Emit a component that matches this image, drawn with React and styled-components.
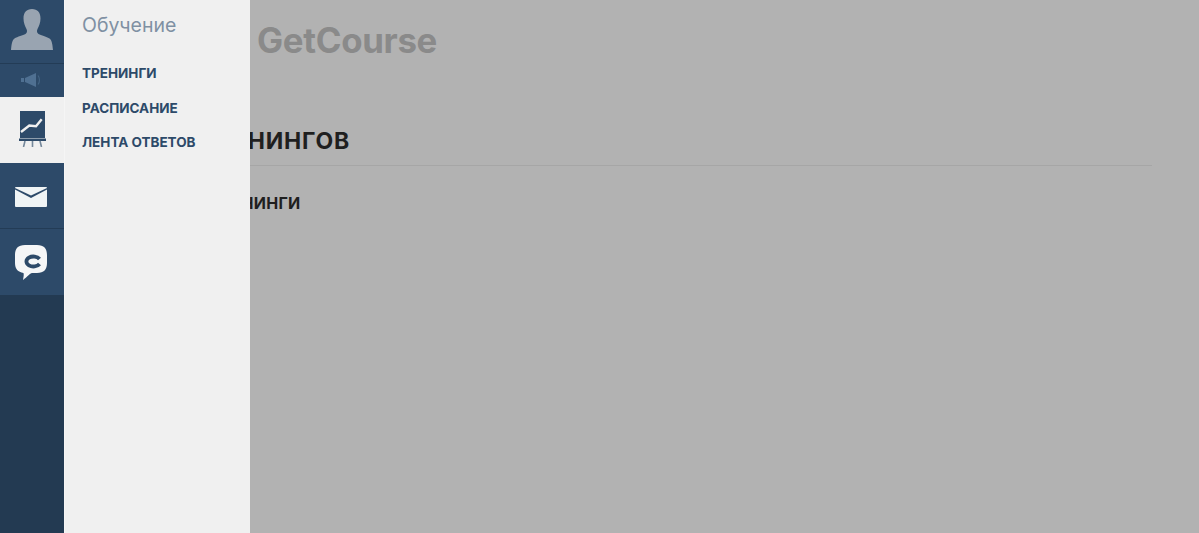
import styled, { createGlobalStyle } from "styled-components";

const GlobalStyle = createGlobalStyle`
  html, body {
    margin: 0;
    height: 100%;
    overflow: hidden;
    background: #b2b2b2;
    font-family: "Inter", "Liberation Sans", sans-serif;
  }
`;

const Page = styled.div`
  position: relative;
  height: 533px;
  overflow: hidden;
  background: #b2b2b2;
`;

const Main = styled.main`
  padding: 0 47px 0 87px;
`;

const Logo = styled.div`
  padding: 20px 0 0 170px;
  font-size: 34.8px;
  line-height: 40px;
  font-weight: 700;
  letter-spacing: -0.3px;
  color: #8a8a8a;
`;

const Title = styled.h1`
  margin: 67px 0 0;
  padding: 0 0 10px 0;
  border-bottom: 1px solid #a6a6a6;
  font-size: 23px;
  line-height: 28px;
  font-weight: 700;
  letter-spacing: 0.8px;
  text-transform: uppercase;
  color: #1f1f1f;
`;

const SubTitle = styled.h2`
  margin: 27px 0 0;
  padding-left: 23px;
  font-size: 16px;
  line-height: 20px;
  font-weight: 700;
  letter-spacing: 0.3px;
  text-transform: uppercase;
  color: #1f1f1f;
`;

const Menu = styled.aside`
  position: absolute;
  top: 0;
  left: 0;
  bottom: 0;
  display: flex;
  width: 250px;
`;

const Rail = styled.nav`
  width: 64px;
  background: #233a52;
`;

const RailItem = styled.div`
  display: flex;
  align-items: center;
  justify-content: center;
  height: ${(p) => p.$h}px;
  box-sizing: border-box;
  padding: ${(p) => p.$pt || 0}px ${(p) => p.$pr || 0}px ${(p) => p.$pb || 0}px 0;
  background: ${(p) => (p.$active ? "#f0f0f0" : "#2d4a69")};
  border-bottom: ${(p) => (p.$line ? "1px solid #233c56" : "none")};
`;

const SubMenu = styled.div`
  flex: 1;
  padding: 13px 0 0 17px;
  background: #f0f0f0;
  border-left: 1px solid #f5f5f5;
`;

const SubHeading = styled.div`
  margin-bottom: 26px;
  font-size: 19.5px;
  line-height: 24px;
  color: #7f90a3;
`;

const SubLink = styled.a`
  display: block;
  height: 34.5px;
  font-size: 13.5px;
  line-height: 20px;
  font-weight: 700;
  letter-spacing: 0;
  color: #2d4a69;
`;

const UserIcon = () => (
  <svg width="42" height="41" viewBox="0 0 42 41">
    <path
      fill="#99a4b1"
      d="M21 0c-5.500 0-8.500 3.500-8.500 9.500 0 4 1.500 8 3 10.500 1 2 .5 4-1 5-2.500 1.500-8 2.500-11 4.500C1 31 .5 36 0 41h42c-.5-5-1-10-3.500-11.500-3-2-8.500-3-11-4.500-1.500-1-2-3-1-5 1.500-2.500 3-6.500 3-10.500C29.500 3.500 26.500 0 21 0z"
    />
  </svg>
);

const SpeakerIcon = () => (
  <svg width="21" height="14" viewBox="0 0 21 14">
    <path fill="#4f7092" d="M0 5h3v4H0zM4 5l11-5v14L4 9z" />
    <path fill="none" stroke="#436484" strokeWidth="1.2" d="M17 2.500c2 2.500 2 6.500 0 9" />
  </svg>
);

const BoardIcon = () => (
  <svg width="27" height="36" viewBox="0 0 27 36">
    <path fill="#2d4a69" d="M1 0h25v27H1z" />
    <path fill="none" stroke="#f0f0f0" strokeWidth="2.400" d="M2 21l8.300-6.500 6.700.7 5.700-7" />
    <path fill="#2d4a69" d="M0 27.500h27V30H0z" />
    <path fill="none" stroke="#74879a" strokeWidth="1.600" d="M6 30L4.500 36M13.500 30v6M21 30l1.500 6" />
  </svg>
);

const MailIcon = () => (
  <svg width="32" height="20" viewBox="0 0 32 20">
    <path fill="#f0f4f5" d="M0 2.500L16 11 32 2.500V19a1 1 0 0 1-1 1H1a1 1 0 0 1-1-1z" />
    <path fill="#f0f4f5" d="M1 0h30a1 1 0 0 1 1 1L16 8.500 0 1a1 1 0 0 1 1-1z" />
  </svg>
);

const ChatIcon = () => (
  <svg width="32" height="35" viewBox="0 0 32 35">
    <path
      fill="#f5f6f7"
      d="M10 0h12c7 0 10 3.500 10 10v8c0 6.500-3 10-10 10h-5c-2 0-5 4-9 7 .5-3 1-5 .5-7C3 27 0 24 0 18v-8C0 3.500 3 0 10 0z"
    />
    <path
      fill="none"
      stroke="#2d4a69"
      strokeWidth="3.800"
      d="M24.500 14A7 5 0 1 0 24.500 19"
    />
  </svg>
);

export default function App() {
  return (
    <>
      <GlobalStyle />
      <Page>
        <Main>
          <Logo>GetCourse</Logo>
          <Title>Список тренингов</Title>
          <SubTitle>Активные тренинги</SubTitle>
        </Main>
        <Menu>
          <Rail>
            <RailItem $h={64} $line $pb={5}><UserIcon /></RailItem>
            <RailItem $h={33} $pb={2} $pr={1}><SpeakerIcon /></RailItem>
            <RailItem $h={66} $active $pb={2}><BoardIcon /></RailItem>
            <RailItem $h={66} $line $pr={2} $pt={2}><MailIcon /></RailItem>
            <RailItem $h={66} $pr={2}><ChatIcon /></RailItem>
          </Rail>
          <SubMenu>
            <SubHeading>Обучение</SubHeading>
            <SubLink>ТРЕНИНГИ</SubLink>
            <SubLink>РАСПИСАНИЕ</SubLink>
            <SubLink>ЛЕНТА ОТВЕТОВ</SubLink>
          </SubMenu>
        </Menu>
      </Page>
    </>
  );
}
